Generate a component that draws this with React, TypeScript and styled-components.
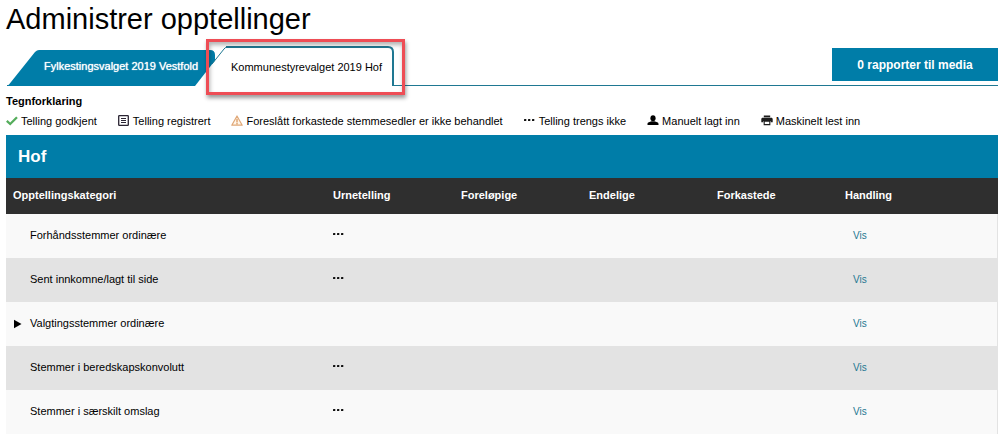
import React, { useState } from "react";
import styled, { createGlobalStyle } from "styled-components";

const blue = "#007da8";
const lineBlue = "#1f7892";

const GlobalStyle = createGlobalStyle`
  body {
    margin: 0;
    background: #fff;
    color: #000;
    font-family: "Liberation Sans", Arial, sans-serif;
    font-size: 11px;
  }
  *, *::before, *::after { box-sizing: border-box; }
`;

const Page = styled.main`
  padding: 0 5px 9px 6px;
`;

const Title = styled.h1`
  margin: 0;
  height: 46px;
  font-size: 29px;
  font-weight: 400;
  line-height: 38px;
  white-space: nowrap;
`;

const TabBar = styled.div`
  display: flex;
  justify-content: space-between;
  align-items: flex-start;
  height: 40px;
  border-bottom: 1px solid ${lineBlue};
  margin-left: 1px;
`;

const TabList = styled.div`
  display: flex;
  align-items: flex-end;
  height: 40px;
`;

const TabButton = styled.button<{ $active: boolean }>`
  position: relative;
  flex: none;
  border: 0;
  background: none;
  font-family: inherit;
  font-size: 11px;
  line-height: 14px;
  text-align: left;
  white-space: nowrap;
  cursor: pointer;
  width: ${(p) => (p.$active ? 199 : 208)}px;
  height: ${(p) => (p.$active ? 40 : 36)}px;
  margin-left: ${(p) => (p.$active ? -20 : 0)}px;
  padding: ${(p) => (p.$active ? "2px 0 0 36px" : "0 0 4px 37px")};
  color: ${(p) => (p.$active ? "#000" : "#fff")};
  text-shadow: ${(p) => (p.$active ? "none" : "0 0 1px #fff")};
`;

const TabShape = styled.svg`
  position: absolute;
  inset: 0;
  width: 100%;
  height: 100%;
`;

const TabLabel = styled.span`
  position: relative;
`;

const Highlight = styled.span`
  position: absolute;
  inset: -7px -11px -9px 11px;
  border: 3px solid #ee4d55;
  box-shadow: 1px 3px 4px rgba(0, 0, 0, 0.4), inset 1px 3px 4px rgba(0, 0, 0, 0.3);
  pointer-events: none;
`;

const MediaButton = styled.button`
  width: 166px;
  height: 33px;
  margin-top: 2px;
  padding: 0;
  border: 0;
  background: ${blue};
  color: #fff;
  font-family: inherit;
  font-size: 12px;
  font-weight: 700;
  cursor: pointer;
`;

const Legend = styled.section`
  padding: 8px 0 7px;
`;

const LegendTitle = styled.h2`
  margin: 0;
  font-size: 11px;
  line-height: 14px;
`;

const LegendList = styled.ul`
  display: flex;
  flex-wrap: wrap;
  gap: 0 21px;
  margin: 0;
  padding: 6px 0 0;
  list-style: none;
`;

const LegendItem = styled.li`
  display: flex;
  align-items: center;
  gap: 3px;
  line-height: 14px;
  white-space: nowrap;
`;

const Icon = styled.svg`
  display: block;
  flex: none;
  width: 12px;
  height: 12px;
`;

const Heading = styled.h2`
  margin: 0;
  padding: 0 12px;
  background: ${blue};
  color: #fff;
  font-size: 17px;
  line-height: 43px;
`;

const Table = styled.table`
  width: 100%;
  border-collapse: collapse;
  table-layout: fixed;
`;

const Column = styled.col<{ $width?: number }>`
  width: ${(p) => (p.$width ? `${p.$width}px` : "auto")};
`;

const HeadCell = styled.th`
  height: 36px;
  padding: 0 7px 2px;
  background: #2f2f2f;
  color: #fff;
  font-size: 11px;
  text-align: left;
`;

const Row = styled.tr`
  background: #f9f9f9;
  box-shadow: inset -1px 0 #e3e3e3;
  &:nth-child(even) { background: #e3e3e3; }
`;

const Cell = styled.td`
  height: 44px;
  padding: 0 7px 2px;
`;

const Category = styled.div`
  display: grid;
  grid-template-columns: 9px 1fr;
  column-gap: 8px;
  align-items: center;
`;

const Expander = styled.button`
  display: block;
  padding: 2px 0 0 1px;
  border: 0;
  background: none;
  cursor: pointer;
`;

const Arrow = styled.svg`
  display: block;
  width: 8px;
  height: 10px;
`;

const ViewLink = styled.a`
  padding-left: 8px;
  color: ${lineBlue};
  font-size: 10px;
  text-decoration: none;
`;

const CheckIcon = () => (
  <Icon viewBox="0 0 12 12" aria-hidden="true">
    <path d="M.8 5.8 4.2 9 11 2.2" fill="none" stroke="#55ad5c" strokeWidth="2.3" />
  </Icon>
);

const ListIcon = () => (
  <Icon viewBox="0 0 12 12" aria-hidden="true">
    <rect x="0.7" y="0.7" width="9.6" height="9.6" rx="0.6" fill="none" stroke="#2a2433" strokeWidth="1.3" />
    <path d="M3 3.5h5M3 5.5h5M3 7.5h5" stroke="#2a2433" strokeWidth="1" />
  </Icon>
);

const WarningIcon = () => (
  <Icon viewBox="0 0 12 12" aria-hidden="true">
    <path d="M6 1 11.2 10.2H.8Z" fill="#fff6ea" stroke="#e0a878" strokeWidth="1.2" strokeLinejoin="round" />
    <path d="M6 3.8v3.6M6 8.1v1.3" stroke="#dc9a62" strokeWidth="1.3" />
  </Icon>
);

const DotsIcon = () => (
  <Icon viewBox="0 0 12 12" role="img" aria-label="Telling trengs ikke">
    <g fill="#111">
      <rect x="0" y="4" width="2.3" height="2" rx="0.5" />
      <rect x="4" y="4" width="2.3" height="2" rx="0.5" />
      <rect x="8" y="4" width="2.3" height="2" rx="0.5" />
    </g>
  </Icon>
);

const PersonIcon = () => (
  <Icon viewBox="0 0 12 12" aria-hidden="true">
    <ellipse cx="6" cy="3.2" rx="2.6" ry="2.9" />
    <path d="M.5 10V8.8C.5 7.5 2.7 6.7 4.6 6.3h2.8c1.9.4 4.1 1.2 4.1 2.5V10Z" />
  </Icon>
);

const PrinterIcon = () => (
  <Icon viewBox="0 0 12 12" aria-hidden="true">
    <path d="M2.8.6h6.4v1.6H2.8ZM1.8 2.8h8.4c.9 0 1.5.6 1.5 1.4v3H9.6V6H2.4v1.2H.3v-3c0-.8.6-1.4 1.5-1.4Z" fill="#1c1c1c" />
    <path d="M3.2 6.2h5.6v3.4H3.2Z" fill="#fff" stroke="#1c1c1c" strokeWidth="1.1" />
  </Icon>
);

const legend = [
  { icon: <CheckIcon />, text: "Telling godkjent" },
  { icon: <ListIcon />, text: "Telling registrert" },
  { icon: <WarningIcon />, text: "Foreslått forkastede stemmesedler er ikke behandlet" },
  { icon: <DotsIcon />, text: "Telling trengs ikke" },
  { icon: <PersonIcon />, text: "Manuelt lagt inn" },
  { icon: <PrinterIcon />, text: "Maskinelt lest inn" },
];

const headings = ["Opptellingskategori", "Urnetelling", "Foreløpige", "Endelige", "Forkastede", "Handling"];

const rows = [
  { name: "Forhåndsstemmer ordinære", notNeeded: true },
  { name: "Sent innkomne/lagt til side", notNeeded: true },
  { name: "Valgtingsstemmer ordinære", expandable: true },
  { name: "Stemmer i beredskapskonvolutt", notNeeded: true },
  { name: "Stemmer i særskilt omslag", notNeeded: true },
];

export default function App() {
  const [expanded, setExpanded] = useState(false);
  return (
    <Page>
      <GlobalStyle />
      <Title>Administrer opptellinger</Title>
      <TabBar>
        <TabList role="tablist">
          <TabButton $active={false} role="tab" aria-selected={false}>
            <TabShape viewBox="0 0 208 36" preserveAspectRatio="none" aria-hidden="true">
              <path d="M0 36 2 34.5 28 2Q30 0 32 0H203Q208 0 208 5V36Z" fill={blue} />
            </TabShape>
            <TabLabel>Fylkestingsvalget 2019 Vestfold</TabLabel>
          </TabButton>
          <TabButton $active role="tab" aria-selected>
            <TabShape viewBox="0 0 199 40" preserveAspectRatio="none" aria-hidden="true">
              <path d="M0 40 29 3Q31 1 34 1H193Q198 1 198 6V40Z" fill="#fff" />
              <path d="M17 18 29 3Q30 1.5 32 1" fill="none" stroke={lineBlue} strokeWidth="1" />
              <path d="M31 1H193Q198 1 198 6V40" fill="none" stroke={lineBlue} strokeWidth="2" />
            </TabShape>
            <TabLabel>Kommunestyrevalget 2019 Hof</TabLabel>
            <Highlight />
          </TabButton>
        </TabList>
        <MediaButton>0 rapporter til media</MediaButton>
      </TabBar>

      <Legend>
        <LegendTitle>Tegnforklaring</LegendTitle>
        <LegendList>
          {legend.map((item) => (
            <LegendItem key={item.text}>
              {item.icon}
              {item.text}
            </LegendItem>
          ))}
        </LegendList>
      </Legend>

      <Heading>Hof</Heading>
      <Table>
        <colgroup>
          <Column />
          <Column $width={128} />
          <Column $width={128} />
          <Column $width={128} />
          <Column $width={128} />
          <Column $width={160} />
        </colgroup>
        <thead>
          <tr>
            {headings.map((text) => (
              <HeadCell key={text} scope="col">{text}</HeadCell>
            ))}
          </tr>
        </thead>
        <tbody>
          {rows.map((row) => (
            <Row key={row.name}>
              <Cell>
                <Category>
                  {row.expandable ? (
                    <Expander
                      aria-label={row.name}
                      aria-expanded={expanded}
                      onClick={() => setExpanded(!expanded)}
                    >
                      <Arrow viewBox="0 0 8 10" aria-hidden="true">
                        <path d="M0 .8 7.5 5 0 9.2Z" />
                      </Arrow>
                    </Expander>
                  ) : (
                    <span />
                  )}
                  <span>{row.name}</span>
                </Category>
              </Cell>
              <Cell>{row.notNeeded && <DotsIcon />}</Cell>
              <Cell />
              <Cell />
              <Cell />
              <Cell>
                <ViewLink href="#vis">Vis</ViewLink>
              </Cell>
            </Row>
          ))}
        </tbody>
      </Table>
    </Page>
  );
}
